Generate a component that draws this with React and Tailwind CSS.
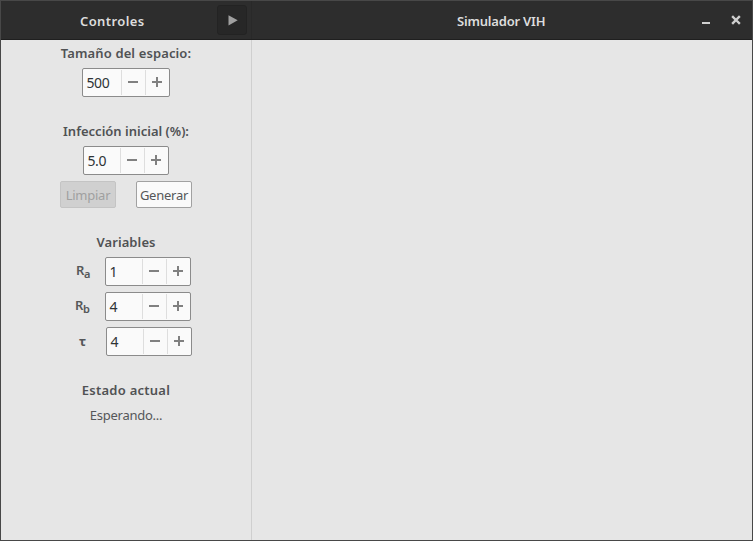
import React from "react";

function Spin({ value, className }) {
  return (
    <div className={`flex h-[29px] shrink-0 rounded-[2px] border border-[#8b8b8b] bg-[#fafafa] ${className}`}>
      <span className="min-w-0 flex-1 pl-[3.5px] text-[14px] leading-[27px] tracking-[-0.4px] text-[#2e3436]">{value}</span>
      <button className="my-px flex w-6 items-center border-l border-[#dedede] pl-[6px]">
        <svg width="10" height="10" shapeRendering="crispEdges" className="mb-px"><path d="M0 4h10v2H0z" fill="#808080" /></svg>
      </button>
      <button className="my-px flex w-6 items-center border-l border-[#dedede] pl-[6px]">
        <svg width="10" height="10" shapeRendering="crispEdges" className="mb-px"><path d="M0 4h10v2H0zM4 0h2v10H4z" fill="#808080" /></svg>
      </button>
    </div>
  );
}

function Heading({ children, className }) {
  return <div className={`flex h-5 justify-center whitespace-nowrap text-[13px] font-semibold leading-5 text-[#505254] ${className}`}>{children}</div>;
}

export default function App() {
  return (
    <div className="flex h-[541px] w-[753px] flex-col overflow-hidden border border-[#484848] bg-[#e6e6e6] font-['Noto_Sans','Open_Sans',sans-serif]">
      <header className="flex h-[39px] shrink-0 border-b border-[#1f1f1f] bg-[#2d2d2d] text-[13px] font-semibold text-[#dddddd]">
        <div className="flex w-[251px] border-r border-[#292929]">
          <div className="w-[216px] pl-[79px] pt-[10px] leading-5 tracking-[0.4px]">Controles</div>
          <button className="mt-1 flex h-[30px] w-[30px] items-center justify-center rounded-[3px] border border-[#232323] bg-[#272727] pl-px">
            <svg width="10" height="11"><path d="M0.5 0.3 9.7 5.3 0.5 10.5z" fill="#a0a0a0" /></svg>
          </button>
        </div>
        <div className="flex flex-1">
          <div className="w-[450px] pl-[205px] pt-[10px] leading-5 tracking-[-0.2px]">Simulador VIH</div>
          <svg width="40" height="38" fill="#cfcfcf"><path d="M0 21h8v2H0z" /><path d="M31 16l6 6M37 16l-6 6" stroke="#cfcfcf" strokeWidth="2.4" strokeLinecap="square" /></svg>
        </div>
      </header>
      <main className="flex flex-1">
        <aside className="flex w-[251px] flex-col border-r border-[#cfcfcf]">
          <Heading className="mt-[3px] tracking-[0.12px]">Tamaño del espacio:</Heading>
          <Spin value="500" className="ml-[81px] mt-[5px] w-[88px]" />
          <Heading className="mt-[24px]">Infección inicial (%):</Heading>
          <Spin value="5.0" className="ml-[82px] mt-[5px] w-[86px]" />
          <div className="ml-[59px] mt-[6px] flex gap-5 text-[13px] leading-[27px] tracking-[-0.25px]">
            <button className="h-[27px] w-14 rounded-[2px] border border-[#c4c4c4] bg-[#d0d0d0] text-[#a0a0a0]">Limpiar</button>
            <button className="h-[27px] w-14 rounded-[2px] border border-[#a1a1a1] bg-[#fafafa] text-[#555759]">Generar</button>
          </div>
          <Heading className="mt-[24px] tracking-[0.1px]">Variables</Heading>
          <div className="mt-[5px] flex flex-col gap-[6px] text-[13px] font-semibold text-[#555759]">
            <div className="flex"><div className="w-[104px] pl-[75px] leading-[26px] tracking-[-0.3px]">R<sub className="text-[11px] leading-none">a</sub></div><div className="font-normal"><Spin value="1" className="w-[86px]" /></div></div>
            <div className="flex"><div className="w-[104px] pl-[74px] leading-[26px] tracking-[-0.3px]">R<sub className="text-[11px] leading-none">b</sub></div><div className="font-normal"><Spin value="4" className="w-[86px]" /></div></div>
            <div className="flex"><div className="w-[105px] pl-[78px] font-bold leading-[29px]">τ</div><div className="font-normal"><Spin value="4" className="w-[86px]" /></div></div>
          </div>
          <Heading className="mt-[24px] tracking-[0.25px]">Estado actual</Heading>
          <div className="mt-[5px] flex justify-center text-[13px] leading-5 tracking-[-0.25px] text-[#555759]">Esperando...</div>
        </aside>
        <section className="flex-1" />
      </main>
    </div>
  );
}
